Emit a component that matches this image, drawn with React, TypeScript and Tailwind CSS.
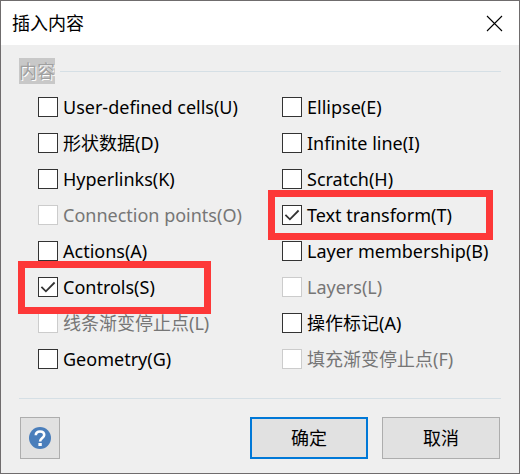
import { useState } from "react";

type Option = {
  id: string;
  label: string;
  checked?: boolean;
  disabled?: boolean;
  highlight?: string;
};

const columns: Option[][] = [
  [
    { id: "cells", label: "User-defined cells(U)" },
    { id: "shape-data", label: "形状数据(D)" },
    { id: "hyperlinks", label: "Hyperlinks(K)" },
    { id: "connection-points", label: "Connection points(O)", disabled: true },
    { id: "actions", label: "Actions(A)" },
    { id: "controls", label: "Controls(S)", checked: true, highlight: "-top-2 -left-5 h-[53px] w-[193px]" },
    { id: "line-stops", label: "线条渐变停止点(L)", disabled: true },
    { id: "geometry", label: "Geometry(G)" },
  ],
  [
    { id: "ellipse", label: "Ellipse(E)" },
    { id: "infinite-line", label: "Infinite line(I)" },
    { id: "scratch", label: "Scratch(H)" },
    { id: "text-transform", label: "Text transform(T)", checked: true, highlight: "-top-[7px] -left-3.5 h-[50px] w-[225px]" },
    { id: "layer-membership", label: "Layer membership(B)" },
    { id: "layers", label: "Layers(L)", disabled: true },
    { id: "action-tags", label: "操作标记(A)" },
    { id: "fill-stops", label: "填充渐变停止点(F)", disabled: true },
  ],
];

function OptionRow({ option }: { option: Option }) {
  const [checked, setChecked] = useState(!!option.checked);

  return (
    <div className="relative flex h-9 items-center gap-[5px]">
      <span className="grid size-5 shrink-0">
        <input
          id={option.id}
          type="checkbox"
          checked={checked}
          disabled={option.disabled}
          onChange={(e) => setChecked(e.target.checked)}
          className="peer col-start-1 row-start-1 size-5 appearance-none border border-[#333333] bg-white disabled:border-[#cccccc]"
        />
        <svg
          viewBox="0 0 20 20"
          className="pointer-events-none invisible col-start-1 row-start-1 size-5 peer-checked:visible"
          fill="none"
          stroke="#333333"
          strokeWidth="1.8"
        >
          <path d="M3.4 9.9 7.9 14.3 16.6 5.5" />
        </svg>
      </span>
      <label htmlFor={option.id} className={`whitespace-nowrap ${option.disabled ? "text-[#767676]" : "text-black"}`}>
        {option.label}
      </label>
      {option.highlight && (
        <div className={`pointer-events-none absolute z-10 border-[7px] border-[#fd3838] ${option.highlight}`} />
      )}
    </div>
  );
}

export default function App() {
  return (
    <div
      role="dialog"
      aria-labelledby="dialog-title"
      className="border border-[#6f6c6d] bg-[#efefef] font-['Noto_Sans','Noto_Sans_CJK_SC',sans-serif] text-lg leading-6 text-black"
    >
      <header className="flex h-11 items-center justify-between bg-white pr-4 pl-[11px]">
        <h1 id="dialog-title">插入内容</h1>
        <button type="button" aria-label="关闭" className="grid size-[17px] place-items-center">
          <svg viewBox="0 0 17 17" className="size-[17px]" fill="none" stroke="#000" strokeWidth="1.1">
            <path d="M1 1 16 16M16 1 1 16" />
          </svg>
        </button>
      </header>

      <main className="px-[18px] pt-[13px]">
        <section role="group" aria-labelledby="group-title">
          <div className="flex items-center gap-[5px]">
            <h2
              id="group-title"
              className="h-[26px] bg-[#c8c8c8] leading-[26px] text-[#a0a0a0] [text-shadow:1px_1px_0_#fff]"
            >
              内容
            </h2>
            <div className="h-px flex-1 bg-[#d5dfe5]" />
          </div>
          <div className="grid grid-cols-[244fr_219fr] pt-[5px] pl-[19px]">
            {columns.map((options, i) => (
              <div key={i}>
                {options.map((option) => (
                  <OptionRow key={option.id} option={option} />
                ))}
              </div>
            ))}
          </div>
        </section>
        <hr className="mt-[21px] border-[#d5dfe5]" />
      </main>

      <footer className="flex gap-3.5 px-[19px] pt-[18px] pb-3.5">
        <button
          type="button"
          aria-label="帮助"
          className="mr-auto grid h-[42px] w-10 place-items-center border border-[#adadad] bg-[#e1e1e1]"
        >
          <svg viewBox="0 0 22 22" className="size-[22px]" fill="none">
            <circle cx="11" cy="11" r="11" fill="#4a7ebb" />
            <path d="M6.8 8.2C6.8 5.9 8.4 4.5 11 4.5s4.2 1.3 4.2 3.4c0 3-4.1 3.2-4.1 6.6" stroke="#fff" strokeWidth="2.6" />
            <path d="M9.4 16h3.4v3H9.4z" fill="#fff" />
          </svg>
        </button>
        <button type="button" className="h-[42px] w-[118px] border-2 border-[#0078d7] bg-[#e1e1e1]">
          确定
        </button>
        <button type="button" className="h-[42px] w-[118px] border border-[#adadad] bg-[#e1e1e1]">
          取消
        </button>
      </footer>
    </div>
  );
}
